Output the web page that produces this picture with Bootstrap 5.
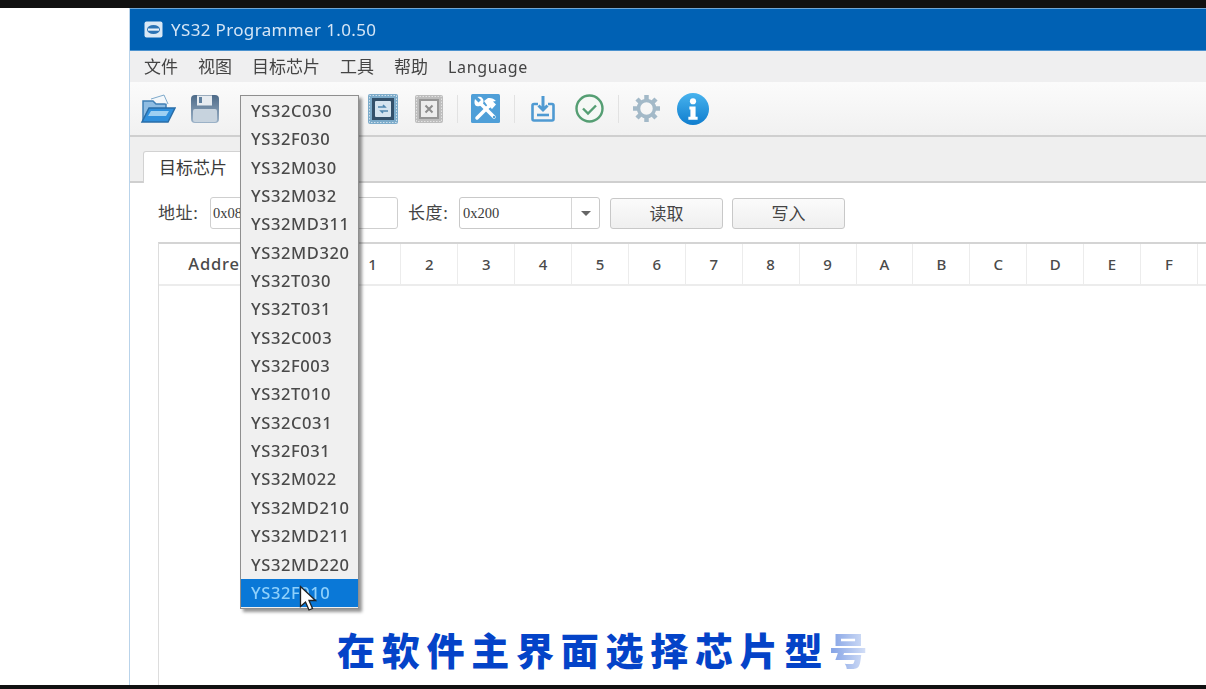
<!DOCTYPE html>
<html lang="zh-CN">
  <head>
    <meta charset="UTF-8" />
    <meta name="viewport" content="width=device-width, initial-scale=1.0" />
    <title>YS32 Programmer</title>
    <link rel="stylesheet" href="https://cdn.jsdelivr.net/npm/bootstrap@5.3.3/dist/css/bootstrap.min.css" />
    <script src="https://cdn.jsdelivr.net/npm/bootstrap@5.3.3/dist/js/bootstrap.bundle.min.js"></script>
    <style>
      html, body { height: 689px; overflow: hidden; background: #fff; }
      body { font-family: "Noto Sans", "Noto Sans CJK SC", "Liberation Sans", sans-serif; color: #3a3a3a; }
      .stage { width: 1206px; height: 689px; position: relative; filter: blur(.4px); }
      .edge-top { height: 8px; background: #111; }
      .edge-bottom { height: 4px; background: #111; }
      .mid { height: 677px; }
      .blank { width: 129px; background: #fff; }
      .app { border-left: 1px solid #b9d3ea; overflow: hidden; min-width: 0; }
      .titlebar { height: 43px; background: #0061b4; color: #d5e6f6; font-size: 17px; letter-spacing: .35px; padding-left: 14px; gap: 8px; border-top: 1px solid #6fa6d6; border-bottom: 1px solid #4b92cf; }
      .menubar { height: 31px; background: #efeff0; font-size: 17px; padding-left: 14px; gap: 20px; color: #444; }
      .menubar .latin { font-size: 16px; letter-spacing: .65px; }
      .toolbar { height: 55px; background: linear-gradient(#fbfbfb, #f1f1f1); border-bottom: 2px solid #cfcfcf; padding-left: 10px; }
      .tool { flex: none; display: block; }
      .sep { width: 1px; height: 28px; background: #e2e2e2; flex: none; }
      .tabstrip { height: 46px; background: #efefef; border-bottom: 2px solid #cfcfcf; padding-left: 13px; }
      .tabhead { width: 110px; height: 32px; background: #fff; border: 1px solid #d2d2d2; border-bottom: 0; border-radius: 3px 3px 0 0; margin-bottom: -2px; font-size: 17px; padding-left: 15px; line-height: 31px; }
      .panel { background: #fff; flex: 1; padding: 14px 0 0 28px; min-height: 0; }
      .fieldrow { height: 32px; font-size: 17px; }
      .lbl { color: #444; width: 42px; flex: none; white-space: nowrap; letter-spacing: .6px; }
      .addr-input { width: 188px; height: 32px; margin: 0 10px; border: 1px solid #cfcfcf; border-radius: 3px; background: #fff; font-size: 14.5px; padding-left: 2px; line-height: 30px; font-family: "Liberation Serif", serif; }
      .len-combo { width: 141px; height: 32px; margin-left: 9px; border: 1px solid #c9c9c9; border-radius: 3px; font-size: 14.5px; font-family: "Liberation Serif", serif; }
      .len-combo .val { flex: 1; padding-left: 3px; line-height: 30px; border-right: 1px solid #d6d6d6; }
      .len-combo .arrow { width: 27px; }
      .caret-dn { width: 0; height: 0; border: 5px solid transparent; border-top: 5px solid #666; border-bottom: 0; }
      .gbtn { width: 113px; height: 31px; background: linear-gradient(#fbfbfb, #efefef); border: 1px solid #c8c8c8; border-radius: 3px; font-size: 17px; line-height: 1; color: #444; padding: 0; }
      .hexgrid { margin: 13px 0 0 0; border: 1px solid #ddd; border-top: 2px solid #d4d4d4; border-right: 0; border-bottom: 0; flex: 1; }
      .hexhead { height: 42px; border-bottom: 2px solid #ececec; font-size: 15px; font-weight: 500; color: #4a4a4a; }
      .hcell { width: 56.9px; flex: none; text-align: center; line-height: 40px; border-right: 1px solid #ececec; }
      .hcell.addr { width: 128.6px; font-size: 16.5px; letter-spacing: .8px; white-space: nowrap; }
      .chipmenu { position: absolute; left: 240px; top: 95px; width: 119px; height: 514px; background: #f0f0f0; border: 1px solid #8f8f8f; box-shadow: 3px 3px 3px rgba(0,0,0,.42); padding-top: 1px; z-index: 5; }
      .chipitem { height: 28.35px; line-height: 28px; padding-left: 10px; font-size: 16.5px; font-weight: 500; letter-spacing: .6px; color: #4a4a4a; white-space: nowrap; }
      .chipitem.picked { background: #0a78d7; color: #8fd0fb; }
      .pointer { position: absolute; left: 299px; top: 585px; z-index: 6; }
      .caption { position: absolute; left: 337px; top: 624px; z-index: 6; font-family: "Noto Sans CJK SC", sans-serif; font-weight: 900; font-size: 38px; line-height: 50px; letter-spacing: 6.75px; white-space: nowrap; color: #0443c8; }
      .caption .fading { background: linear-gradient(90deg, #7f9fe4, #e6edfb); -webkit-background-clip: text; background-clip: text; color: transparent; }
    </style>
  </head>
  <body>
    <div class="stage d-flex flex-column">
      <div class="edge-top"></div>
      <div class="mid d-flex">
        <div class="blank"></div>
        <div class="app flex-grow-1 d-flex flex-column">
          <div class="titlebar d-flex align-items-center">
            <svg width="19" height="17" viewBox="0 0 19 17">
              <rect x="0.5" y="0.5" width="18" height="16" rx="2" fill="#d9e8f5" />
              <ellipse cx="9.5" cy="8.5" rx="6.5" ry="4.5" fill="#2b73b5" />
              <rect x="4" y="7.5" width="11" height="2.2" fill="#e8f1f9" />
            </svg>
            <span>YS32 Programmer 1.0.50</span>
          </div>
          <div class="menubar d-flex align-items-center">
            <span>文件</span><span>视图</span><span>目标芯片</span><span>工具</span><span>帮助</span><span class="latin">Language</span>
          </div>
          <div class="toolbar d-flex align-items-center">
            <svg class="tool" style="margin-right:14px" width="36" height="32" viewBox="0 0 36 32">
              <path d="M3 8h10l3 3h10v5H9L3 28z" fill="#8fbde3" stroke="#3f7fb5" stroke-width="1.5" />
              <path d="M11 6l13-4 4 9" fill="#f4f8fb" stroke="#7ea9cb" />
              <path d="M9 15h26l-7 14H2z" fill="#2f8fdc" stroke="#2a6ea8" stroke-width="1.5" />
              <path d="M11 18h18l-3 5H8z" fill="#9fd0f2" />
            </svg>
            <svg class="tool" width="30" height="30" viewBox="0 0 30 30">
              <defs>
                <linearGradient id="diskFill" x1="0" y1="0" x2="0" y2="1">
                  <stop offset="0" stop-color="#4d6a88" />
                  <stop offset="1" stop-color="#9db3c8" />
                </linearGradient>
              </defs>
              <rect x="1" y="1" width="28" height="28" rx="4" fill="url(#diskFill)" />
              <rect x="7" y="1.5" width="15" height="10" fill="#e6ebf0" />
              <rect x="9" y="3" width="3" height="6" fill="#5f7f9e" />
              <rect x="3" y="15" width="24" height="13" rx="2" fill="#c7d3de" />
            </svg>
            <div style="width:147px"></div>
            <svg class="tool" style="margin-right:15px" width="32" height="32" viewBox="0 0 32 32">
              <rect x="1" y="1" width="30" height="30" rx="2" fill="#7cabca" />
              <rect x="2.500" y="2.500" width="27" height="27" fill="none" stroke="#cfe0ec" stroke-width="1" stroke-dasharray="1.500 1.500" />
              <rect x="5" y="5" width="22" height="22" fill="#33506a" />
              <rect x="8" y="8" width="16" height="16" rx="1" fill="#d4e3ef" />
              <path d="M11 14h7l-2-2M21 18h-7l2 2" fill="none" stroke="#4f87b0" stroke-width="1.500" />
            </svg>
            <svg class="tool" style="margin-right:13px" width="30" height="30" viewBox="0 0 30 30">
              <rect x="1" y="1" width="28" height="28" rx="2" fill="#bdbdbd" />
              <rect x="2.500" y="2.500" width="25" height="25" fill="none" stroke="#e3e3e3" stroke-width="1" stroke-dasharray="1.500 1.500" />
              <rect x="5" y="5" width="20" height="20" fill="#969696" />
              <rect x="7" y="7" width="16" height="16" fill="#ededed" />
              <path d="M11.500 11.500l7 7M18.500 11.500l-7 7" stroke="#8d8d8d" stroke-width="2" />
            </svg>
            <div class="sep" style="margin-right:13px"></div>
            <svg class="tool" style="margin-right:14px" width="29" height="29" viewBox="0 0 29 29">
              <rect width="29" height="29" rx="1.500" fill="#4f9fd8" />
              <!-- hammer -->
              <path d="M6 24L18 12" stroke="#fff" stroke-width="3.500" stroke-linecap="round" />
              <path d="M13 7l4-3c3-.5 6 .5 8 3l-3 .5 3 3-4 4.500-3-3-1 .5z" fill="#fff" />
              <!-- wrench -->
              <path d="M10 10l13 13" stroke="#fff" stroke-width="3.500" stroke-linecap="round" />
              <path d="M4 5l3.500 3.500 2.500-2.500L6.500 3C9.500 2 13 4 12.500 8c-.3 2.500-3.500 5-7 4C3.500 11.500 3 8 4 5z" fill="#fff" />
              <circle cx="23" cy="23" r="1.200" fill="#4f9fd8" />
            </svg>
            <div class="sep" style="margin-right:16px"></div>
            <svg class="tool" style="margin-right:20px" width="24" height="27" viewBox="0 0 24 27">
              <path d="M7 9H3a1.500 1.500 0 0 0-1.500 1.500V24A1.500 1.500 0 0 0 3 25.500h18a1.500 1.500 0 0 0 1.500-1.500V10.500A1.500 1.500 0 0 0 21 9h-4" fill="none" stroke="#4f9ad2" stroke-width="2.600" />
              <path d="M12 1v13M7.500 10.500L12 15l4.500-4.500" fill="none" stroke="#4f9ad2" stroke-width="3" />
              <path d="M6 20h12" stroke="#4f9ad2" stroke-width="2.600" />
            </svg>
            <svg class="tool" style="margin-right:14px" width="29" height="29" viewBox="0 0 29 29">
              <circle cx="14.500" cy="14.500" r="13" fill="#f5f8f5" stroke="#559e73" stroke-width="2.400" />
              <path d="M8 14.500l5 5 8-8" fill="none" stroke="#559e73" stroke-width="2.400" />
            </svg>
            <div class="sep" style="margin-right:13px"></div>
            <svg class="tool" style="margin-right:16px" width="29" height="29" viewBox="0 0 29 29">
              <circle cx="14.500" cy="14.500" r="8" fill="none" stroke="#a3b9c8" stroke-width="3.500" />
              <path d="M14.500 1v5M14.500 23v5M1 14.500h5M23 14.500h5M5 5l3.500 3.500M20.500 20.500L24 24M24 5l-3.500 3.500M8.500 20.500L5 24" stroke="#a3b9c8" stroke-width="4.500" />
            </svg>
            <svg class="tool" width="32" height="32" viewBox="0 0 31 31">
              <defs>
                <linearGradient id="infoFill" x1="0" y1="0" x2="0" y2="1">
                  <stop offset="0" stop-color="#48b3ee" />
                  <stop offset="1" stop-color="#0f7dce" />
                </linearGradient>
              </defs>
              <circle cx="15.500" cy="15.500" r="15.500" fill="url(#infoFill)" />
              <circle cx="15.500" cy="8" r="3" fill="#fff" />
              <path d="M12 13h6v10h2v3h-9v-3h2v-7h-1z" fill="#fff" />
            </svg>
          </div>
          <div class="tabstrip d-flex align-items-end">
            <div class="tabhead">目标芯片</div>
          </div>
          <div class="panel d-flex flex-column">
            <div class="fieldrow d-flex align-items-center">
              <span class="lbl">地址:</span>
              <div class="addr-input">0x08000000</div>
              <span class="lbl">长度:</span>
              <div class="len-combo d-flex">
                <div class="val">0x200</div>
                <div class="arrow d-flex align-items-center justify-content-center"><div class="caret-dn"></div></div>
              </div>
              <button type="button" class="gbtn" style="margin-left:10px">读取</button>
              <button type="button" class="gbtn" style="margin-left:9px">写入</button>
            </div>
            <div class="hexgrid">
              <div class="hexhead d-flex">
                <div class="hcell addr">Address</div>
                <div class="hcell">0</div><div class="hcell">1</div><div class="hcell">2</div><div class="hcell">3</div>
                <div class="hcell">4</div><div class="hcell">5</div><div class="hcell">6</div><div class="hcell">7</div>
                <div class="hcell">8</div><div class="hcell">9</div><div class="hcell">A</div><div class="hcell">B</div>
                <div class="hcell">C</div><div class="hcell">D</div><div class="hcell">E</div><div class="hcell">F</div>
              </div>
            </div>
          </div>
        </div>
      </div>
      <div class="edge-bottom"></div>

      <div class="chipmenu">
        <div class="chipitem">YS32C030</div>
        <div class="chipitem">YS32F030</div>
        <div class="chipitem">YS32M030</div>
        <div class="chipitem">YS32M032</div>
        <div class="chipitem">YS32MD311</div>
        <div class="chipitem">YS32MD320</div>
        <div class="chipitem">YS32T030</div>
        <div class="chipitem">YS32T031</div>
        <div class="chipitem">YS32C003</div>
        <div class="chipitem">YS32F003</div>
        <div class="chipitem">YS32T010</div>
        <div class="chipitem">YS32C031</div>
        <div class="chipitem">YS32F031</div>
        <div class="chipitem">YS32M022</div>
        <div class="chipitem">YS32MD210</div>
        <div class="chipitem">YS32MD211</div>
        <div class="chipitem">YS32MD220</div>
        <div class="chipitem picked">YS32F010</div>
      </div>
      <svg class="pointer" width="18" height="27" viewBox="0 0 18 27">
        <path d="M1.500 1.500v20l5-4.500 3.500 8 3.500-1.500-3.500-8h6.500z" fill="#fff" stroke="#222" stroke-width="1.300" />
      </svg>
      <div class="caption">在软件主界面选择芯片型<span class="fading">号</span></div>
    </div>
  </body>
</html>
